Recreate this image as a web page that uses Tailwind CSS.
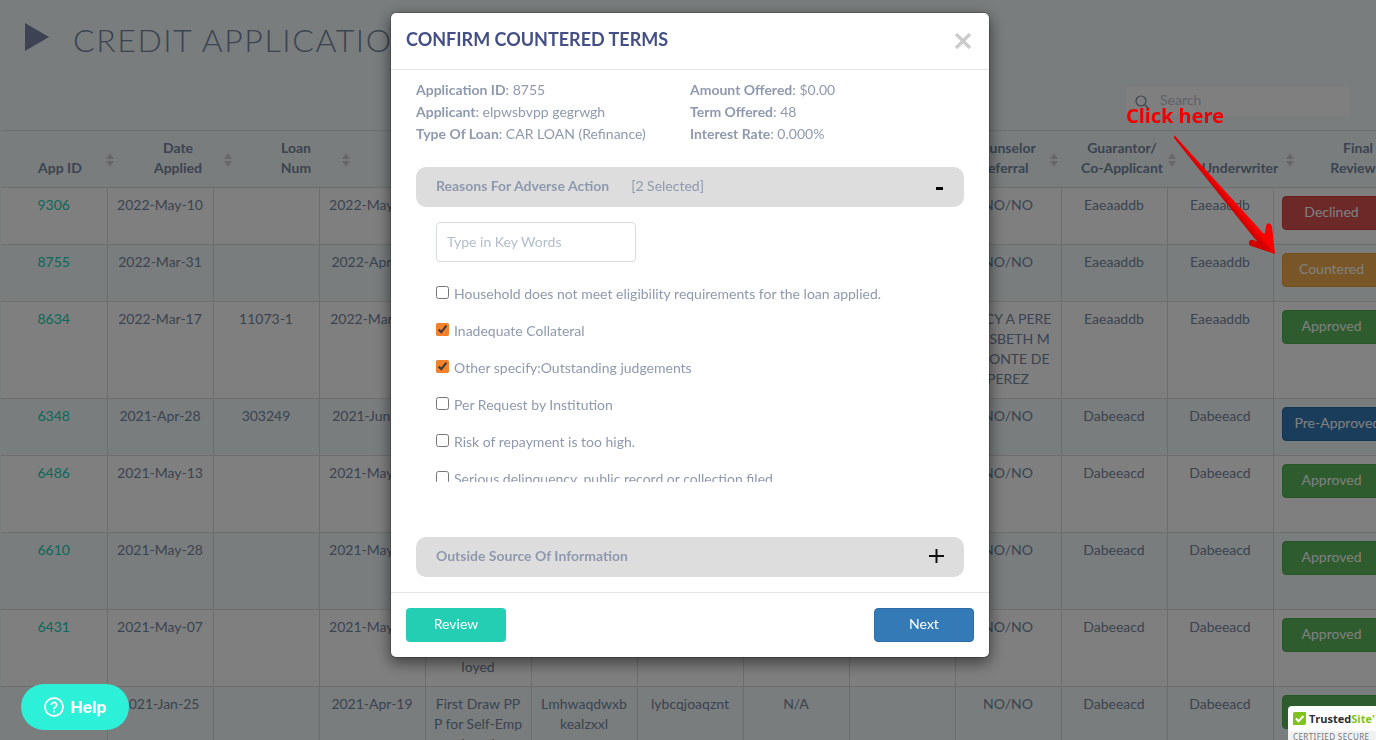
<!DOCTYPE html>
<html lang="en">
<head>
    <meta charset="UTF-8">
    <meta name="viewport" content="width=device-width, initial-scale=1.0">
    <title>Credit Applications</title>
    <script src="https://cdn.jsdelivr.net/npm/@tailwindcss/browser@4"></script>
</head>
<body class="h-screen overflow-hidden bg-[#f3fafb] font-['Lato','Liberation_Sans',sans-serif] text-sm leading-5 text-[#7788a2]">
    <!-- Page -->
    <div class="h-screen overflow-hidden pl-px">
        <header class="flex h-[86px] items-start pl-6 pt-5">
            <svg class="mt-[3px] h-7 w-6 shrink-0" viewBox="0 0 24 28" fill="#7c86a6"><path d="M0 0 24 14 0 28Z"/></svg>
            <h1 class="ml-6 whitespace-nowrap text-[32px] font-light leading-10 tracking-wider">CREDIT APPLICATIONS</h1>
        </header>

        <div class="flex h-11 justify-end pr-[26px]">
            <div class="relative h-[29px] w-56">
                <svg class="absolute left-2 top-2 size-4" viewBox="0 0 16 16" fill="none" stroke="#7587a0" stroke-width="1.2"><circle cx="7" cy="7" r="5"/><path d="m11 11 4 4"/></svg>
                <input type="search" aria-label="Search" placeholder="Search" class="h-full w-full rounded bg-white pb-[3px] pl-[34px] pr-2 placeholder:text-[#bcc5d2]">
            </div>
        </div>

        <!-- Column titles -->
        <div id="columnTitles" class="flex h-[57px] w-max border-t border-[#ddd] font-bold"></div>

        <!-- Applications -->
        <table class="w-[1389px] table-fixed border-collapse text-center">
            <colgroup>
                <col span="12" class="w-[106px]">
                <col>
            </colgroup>
            <tbody id="applications"></tbody>
        </table>
    </div>

    <!-- Confirm terms dialog -->
    <div class="fixed inset-0 flex items-start justify-center bg-black/50 pl-1 pt-3">
        <div role="dialog" aria-labelledby="dialogTitle" class="w-[600px] rounded-md border border-black/20 bg-white bg-clip-padding text-[#8f99ae] shadow-[0_5px_15px_rgba(0,0,0,0.5)]">
            <div class="flex h-[57px] items-start justify-between border-b border-[#e5e5e5] px-[15px] pt-4">
                <h2 id="dialogTitle" class="text-lg font-bold leading-5 text-[#434f86]">CONFIRM COUNTERED TERMS</h2>
                <button type="button" aria-label="Close" class="mt-1 mr-[3px]">
                    <svg class="size-4" viewBox="0 0 16 16" stroke="#ccc" stroke-width="3.4"><path d="m1 1 14 14M15 1 1 15"/></svg>
                </button>
            </div>

            <div class="px-[25px] pb-[15px] pt-[9px]">
                <div class="grid grid-cols-2 leading-[22px]">
                    <p><b>Application ID</b>: 8755</p>
                    <p><b>Amount Offered</b>: $0.00</p>
                    <p><b>Applicant</b>: elpwsbvpp gegrwgh</p>
                    <p><b>Term Offered</b>: 48</p>
                    <p><b>Type Of Loan</b>: CAR LOAN (Refinance)</p>
                    <p><b>Interest Rate</b>: 0.000%</p>
                </div>

                <button type="button" aria-expanded="true" class="mt-[22px] flex h-10 w-full items-center rounded-[10px] bg-[#ddd] px-5 pb-0.5">
                    <b>Reasons For Adverse Action</b>
                    <span class="ml-[22px]">[2 Selected]</span>
                    <svg class="ml-auto mr-px mt-1 h-[3px] w-[7px]" viewBox="0 0 7 3"><path fill="#000" d="M0 0h7v3H0z"/></svg>
                </button>

                <div class="h-[275px] px-5 pt-[15px]">
                    <input type="text" aria-label="Key words" placeholder="Type in Key Words" class="block h-10 w-[200px] rounded border border-[#d5dae3] px-[10px] pb-0.5 placeholder:text-[#b4bdcb]">
                    <div id="reasons" class="mt-[14px] h-[206px] overflow-hidden"></div>
                </div>

                <button type="button" aria-expanded="false" class="mt-[55px] flex h-10 w-full items-center justify-between rounded-[10px] bg-[#ddd] px-5 pb-0.5">
                    <b>Outside Source Of Information</b>
                    <svg class="h-[14px] w-[15px]" viewBox="0 0 15 14" stroke="#111" stroke-width="2"><path d="M0 7h15M7.500 0v14"/></svg>
                </button>
            </div>

            <div class="flex justify-between border-t border-[#e5e5e5] p-[15px]">
                <button type="button" class="h-[34px] w-[100px] rounded bg-[#23ceb3] pb-0.5 text-white">Review</button>
                <button type="button" class="h-[34px] w-[100px] rounded border border-[#2e6da4] bg-[#337ab7] pb-0.5 text-white">Next</button>
            </div>
        </div>
    </div>

    <!-- Callout -->
    <p class="fixed right-[152px] top-[103px] font-['Noto_Sans',sans-serif] text-xl font-bold leading-[26px] text-[#f00000]">Click here</p>
    <svg class="fixed right-[99px] top-[135px] h-[120px] w-[104px]" viewBox="0 0 104 120">
        <defs>
            <linearGradient id="arrow" gradientUnits="userSpaceOnUse" x1="80" y1="106" x2="93" y2="95">
                <stop offset="0.3" stop-color="#d20000"/>
                <stop offset="0.6" stop-color="#fa0202"/>
            </linearGradient>
        </defs>
        <path fill="url(#arrow)" d="M1 1Q2 0 3 2L90 98Q92 100 92 97L93 92C93 87 98 87 99 92L102 119 78 111C74 109 76 104 80 105L83 106Q85 106 82 104L1 3Z"/>
    </svg>

    <!-- Help launcher -->
    <button type="button" class="fixed bottom-[10px] left-[21px] flex h-[46px] w-[108px] items-center justify-center gap-[7px] rounded-full bg-[#2cf0d8] font-['Inter',sans-serif] text-base font-bold text-white">
        <svg class="size-5" viewBox="0 0 20 20" fill="none" stroke="#fff" stroke-width="1.8"><circle cx="10" cy="10" r="9"/><path d="M7.300 8a2.700 2.600 0 1 1 4.200 2.100c-.9.600-1.500 1-1.500 2.100"/><path d="M10 13.600v1.900"/></svg>
        Help
    </button>

    <!-- Trust badge -->
    <a href="#" class="fixed bottom-0 right-0 block h-[34px] w-[88px] overflow-hidden whitespace-nowrap rounded-tl-sm bg-white font-['Open_Sans',sans-serif]">
        <span class="flex h-[25px] items-center gap-[3px] pl-[5px] text-[11px] font-bold text-[#2b2e33]">
            <svg class="size-[13px] shrink-0" viewBox="0 0 13 13" fill="none"><path fill="#7fc31c" d="M2 0h11v11a2 2 0 0 1-2 2H0V2a2 2 0 0 1 2-2Z"/><path stroke="#fff" stroke-width="2" d="m3 6.500 2.500 2.800L10.500 4"/></svg>
            <span>Trusted<span class="text-[#7fc31c]">Site'</span></span>
        </span>
        <span class="block h-[9px] bg-[#f0f1f1] pl-[5px] font-['Noto_Sans',sans-serif] text-[8px] leading-[11px] tracking-wider text-[#777]">CERTIFIED SECURE</span>
    </a>

    <script>
        const titles = ['App ID', 'Date<br>Applied', 'Loan<br>Num', 'Date<br>Funded', 'Loan<br>Type', 'Applicant', 'Branch', 'Status', 'Counselor<br>Referral', 'Guarantor/<br>Co-Applicant', 'Underwriter', 'Final<br>Review&nbsp;&nbsp;&nbsp;'];

        const reasons = [
            ['Household does not meet eligibility requirements for the loan applied.', ''],
            ['Inadequate Collateral', 'checked'],
            ['Other specify:Outstanding judgements', 'checked'],
            ['Per Request by Institution', ''],
            ['Risk of repayment is too high.', ''],
            ['Serious delinquency, public record or collection filed.', '']
        ];

        const buttonColors = {
            'Declined': 'bg-[#d9534f] border-[#d43f3a]',
            'Countered': 'bg-[#f0ad4e] border-[#eea236]',
            'Approved': 'bg-[#5cb85c] border-[#4cae4c]',
            'Pre-Approved': 'bg-[#337ab7] border-[#2e6da4]'
        };

        const draw = 'First Draw PP<br>P for Self-Emp<br>loyed';
        const applications = [
            ['9306', '2022-May-10', '', '2022-May-12', 'Car Loan<br>&nbsp;', '', '', '', '', 'NO/NO', 'Eaeaaddb', 'Eaeaaddb', 'Declined'],
            ['8755', '2022-Mar-31', '', '2022-Apr-04', 'Car Loan<br>&nbsp;', '', '', '', '', 'NO/NO', 'Eaeaaddb', 'Eaeaaddb', 'Countered'],
            ['8634', '2022-Mar-17', '11073-1', '2022-Mar-18', 'Car Loan', '', '', '', '', 'ANCY A PERE<br>Z LISBETH M<br>AMONTE DE<br>PEREZ', 'Eaeaaddb', 'Eaeaaddb', 'Approved'],
            ['6348', '2021-Apr-28', '303249', '2021-Jun-07', 'Car Loan<br>&nbsp;', '', '', '', '', 'NO/NO', 'Dabeeacd', 'Dabeeacd', 'Pre-Approved'],
            ['6486', '2021-May-13', '', '2021-May-18', draw, '', '', '', '', 'NO/NO', 'Dabeeacd', 'Dabeeacd', 'Approved'],
            ['6610', '2021-May-28', '', '2021-May-28', draw, '', '', '', '', 'NO/NO', 'Dabeeacd', 'Dabeeacd', 'Approved'],
            ['6431', '2021-May-07', '', '2021-May-10', draw, '', '', '', '', 'NO/NO', 'Dabeeacd', 'Dabeeacd', 'Approved'],
            ['5012', '2021-Jan-25', '', '2021-Apr-19', draw, 'Lmhwaqdwxb<br>kealzxxl', 'lybcqjoaqznt', 'N/A', '', 'NO/NO', 'Dabeeacd', 'Dabeeacd', 'Approved']
        ];

        document.getElementById('columnTitles').innerHTML = titles.map(title => `
            <div class="relative flex w-[118px] items-end justify-center pb-[9px] text-center">
                <span>${title}</span>
                <svg class="absolute right-[5px] top-[22px] h-[14px] w-2" viewBox="0 0 8 14" fill="#d0cfcf"><path d="M4 0 8 6H0ZM0 8h8L4 14Z"/></svg>
            </div>`).join('');

        document.getElementById('applications').innerHTML = applications.map(row => `
            <tr class="odd:bg-white">
                ${row.map((cell, index) => {
                    if (index === 0) {
                        return `<td class="border border-l-0 border-[#ddd] pb-[9px] pt-[7px] align-top"><a href="#" class="text-[#23ceb0]">${cell}</a></td>`;
                    }
                    if (index === 12) {
                        return `<td class="border border-[#ddd] p-2 align-top"><button type="button" class="block h-[34px] min-w-[100px] whitespace-nowrap rounded border px-3 pb-0.5 text-white ${buttonColors[cell]}">${cell}</button></td>`;
                    }
                    return `<td class="whitespace-nowrap border border-[#ddd] pb-[9px] pt-[7px] align-top">${cell}</td>`;
                }).join('')}
            </tr>`).join('');

        document.getElementById('reasons').innerHTML = reasons.map(([text, checked]) => `
            <label class="flex h-[37px] items-center pb-0.5">
                <input type="checkbox" ${checked} class="mb-0.5 mr-[5px] size-[13px] accent-[#f5812a]">
                ${text}
            </label>`).join('');
    </script>
</body>
</html>
